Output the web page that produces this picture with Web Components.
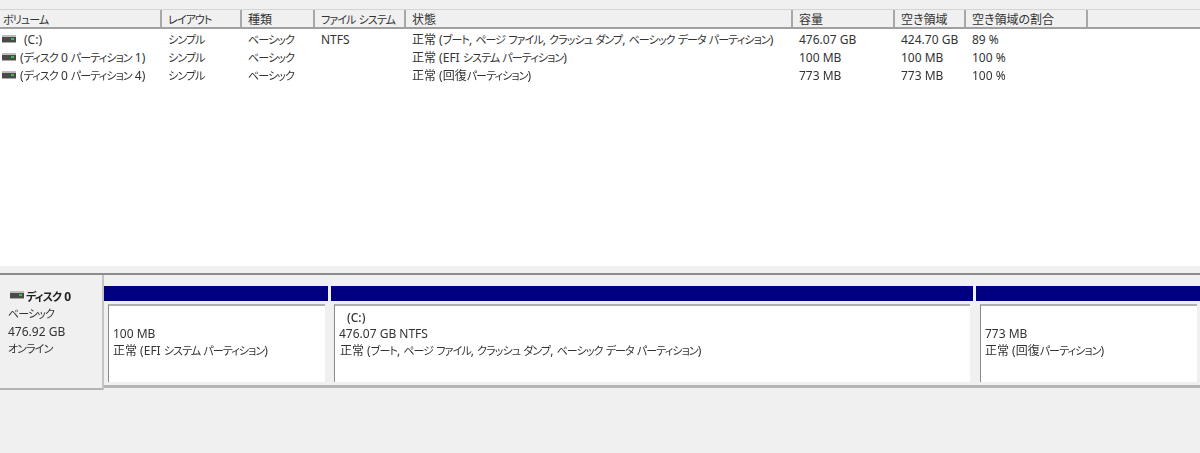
<!DOCTYPE html>
<html lang="ja">
<head>
<meta charset="utf-8">
<title>ディスクの管理</title>
<style>
html, body { margin: 0; height: 100%; overflow: hidden; }
body {
  background: #f0f0f0;
  color: #333;
  font: 12px/18px "Noto Sans", "Noto Sans CJK JP", sans-serif;
  font-feature-settings: "palt";
  --cols: 162px 80px 73px 91px 387px 102px 71px 122px 1fr;
}
</style>
</head>
<body>
<disk-manager>
  <volume-list slot="top">
    <list-head>
      <jp-t>ボリューム</jp-t><jp-t>レイアウト</jp-t><jp-t>種類</jp-t><jp-t>ファイル システム</jp-t><jp-t>状態</jp-t><jp-t>容量</jp-t><jp-t>空き領域</jp-t><jp-t>空き領域の割合</jp-t><span></span>
    </list-head>
    <list-row name="(C:)" gap="8">
      <jp-t>シンプル</jp-t><jp-t>ベーシック</jp-t><jp-t>NTFS</jp-t><jp-t>正常 (ブート, ページ ファイル, クラッシュ ダンプ, ベーシック データ パーティション)</jp-t><jp-t>476.07 GB</jp-t><jp-t>424.70 GB</jp-t><jp-t>89 %</jp-t>
    </list-row>
    <list-row name="(ディスク 0 パーティション 1)" gap="4">
      <jp-t>シンプル</jp-t><jp-t>ベーシック</jp-t><span></span><jp-t>正常 (EFI システム パーティション)</jp-t><jp-t>100 MB</jp-t><jp-t>100 MB</jp-t><jp-t>100 %</jp-t>
    </list-row>
    <list-row name="(ディスク 0 パーティション 4)" gap="4">
      <jp-t>シンプル</jp-t><jp-t>ベーシック</jp-t><span></span><jp-t>正常 (回復パーティション)</jp-t><jp-t>773 MB</jp-t><jp-t>773 MB</jp-t><jp-t>100 %</jp-t>
    </list-row>
  </volume-list>
  <disk-row slot="bottom">
    <disk-label slot="label" name="ディスク 0">
      <div><jp-t>ベーシック</jp-t></div><div>476.92 GB</div><div><jp-t>オンライン</jp-t></div>
    </disk-label>
    <disk-part style="width:224px" inset="4">
      <div style="height:16px"></div><div>100 MB</div><div><jp-t>正常 (EFI システム パーティション)</jp-t></div>
    </disk-part>
    <disk-part style="width:642px" inset="3">
      <div style="height:16px;padding-left:8px;font-weight:500">(C:)</div><div>476.07 GB NTFS</div><div style="padding-left:1px"><jp-t>正常 (ブート, ページ ファイル, クラッシュ ダンプ, ベーシック データ パーティション)</jp-t></div>
    </disk-part>
    <disk-part style="flex:1" inset="4">
      <div style="height:16px"></div><div>773 MB</div><div><jp-t>正常 (回復パーティション)</jp-t></div>
    </disk-part>
  </disk-row>
</disk-manager>

<script>
var driveSvg = `<svg width="14" height="8" viewBox="0 0 14 8" style="display:block;flex:none">
<rect x="0" y="0" width="14" height="2" fill="#bdbdbd"/>
<rect x="0" y="2" width="14" height="5" fill="#4a4a4a"/>
<rect x="9" y="3" width="3" height="2" fill="#35c03a"/>
<rect x="0" y="7" width="14" height="1" fill="#a8a8a8"/>
</svg>`

// moves the children of a row into named slots, one per grid cell
function slotCells(el) {
  var cells = ''
  for(var i = 0; i < el.children.length; i++) {
    el.children[i].slot = 'c' + i
    cells += `<div class="cell"><slot name="c${i}"></slot></div>`
  }
  return cells
}

// katakana in the reference font is narrow, so those runs get squeezed
class JpText extends HTMLElement {
  connectedCallback() {
    var shadow = this.attachShadow({mode: 'open'})
    var html = this.textContent.replace(/[\u30A0-\u30FF]+/g, function(run) {
      return `<span class="k">${run}</span>`
    })
    shadow.innerHTML = `<style>
:host { display: inline; }
.k { font-size: 11px; letter-spacing: -0.9px; }
</style>${html}`
  }
}
customElements.define('jp-t', JpText)

class DiskManager extends HTMLElement {
  connectedCallback() {
    var shadow = this.attachShadow({mode: 'open'})
    shadow.innerHTML = `<style>
:host { display: flex; flex-direction: column; height: 453px; filter: blur(0.3px); }
#top { flex: none; height: 266px; padding-top: 9px; box-sizing: border-box; }
#split { flex: none; height: 9px; border-bottom: 2px solid #8c8c8c; box-sizing: border-box; }
#bottom { flex: 1; }
</style>
<div id="top"><slot name="top"></slot></div>
<div id="split"></div>
<div id="bottom"><slot name="bottom"></slot></div>`
  }
}
customElements.define('disk-manager', DiskManager)

class VolumeList extends HTMLElement {
  connectedCallback() {
    var shadow = this.attachShadow({mode: 'open'})
    shadow.innerHTML = `<style>
:host { display: block; height: 257px; background: #fff; }
</style><slot></slot>`
  }
}
customElements.define('volume-list', VolumeList)

class ListHead extends HTMLElement {
  connectedCallback() {
    var shadow = this.attachShadow({mode: 'open'})
    var cells = slotCells(this)
    shadow.innerHTML = `<style>
:host { display: grid; grid-template-columns: var(--cols); height: 20px; background: #f0f0f0; box-sizing: border-box; border-top: 1px solid #d4d4d4; border-bottom: 2px solid #a0a0a0; }
.cell { padding-left: 6px; border-right: 2px solid #a8a8a8; box-sizing: border-box; line-height: 19px; white-space: nowrap; overflow: hidden; }
.cell:first-of-type { padding-left: 3px; }
.cell:last-of-type { border-right: 0; }
</style>${cells}`
  }
}
customElements.define('list-head', ListHead)

class ListRow extends HTMLElement {
  connectedCallback() {
    var shadow = this.attachShadow({mode: 'open'})
    var cells = slotCells(this)
    shadow.innerHTML = `<style>
:host { display: grid; grid-template-columns: var(--cols); height: 18px; }
.cell { padding: 1px 0 0 6px; white-space: nowrap; line-height: 20px; }
#first { display: flex; align-items: center; padding: 1px 0 0 2px; line-height: 20px; white-space: nowrap; gap: ${this.getAttribute('gap')}px; }
#first svg { margin-top: -2px; }
</style>
<div id="first">${driveSvg}<jp-t>${this.getAttribute('name')}</jp-t></div>${cells}`
  }
}
customElements.define('list-row', ListRow)

class DiskRow extends HTMLElement {
  connectedCallback() {
    var shadow = this.attachShadow({mode: 'open'})
    shadow.innerHTML = `<style>
:host { display: flex; align-items: flex-start; }
#parts { flex: 1; min-width: 0; display: flex; gap: 3px; padding: 11px 0 0 0; height: 99px; border-bottom: 3px solid #b4b4b4; }
</style>
<slot name="label"></slot>
<div id="parts"><slot></slot></div>`
  }
}
customElements.define('disk-row', DiskRow)

class DiskLabel extends HTMLElement {
  connectedCallback() {
    var shadow = this.attachShadow({mode: 'open'})
    shadow.innerHTML = `<style>
:host { display: block; flex: none; width: 104px; height: 115px; box-sizing: border-box; padding: 13px 0 0 8px; border-right: 2px solid #c4c4c4; border-bottom: 2px solid #b4b4b4; }
#name { display: flex; align-items: center; gap: 2px; font-weight: 700; height: 17px; margin-left: 2px; color: #222; }
#name svg { margin-top: -4px; }
::slotted(div) { height: 17.5px; }
</style>
<div id="name">${driveSvg}<jp-t>${this.getAttribute('name')}</jp-t></div>
<slot></slot>`
  }
}
customElements.define('disk-label', DiskLabel)

class DiskPart extends HTMLElement {
  connectedCallback() {
    var shadow = this.attachShadow({mode: 'open'})
    shadow.innerHTML = `<style>
:host { display: flex; flex-direction: column; height: 96px; min-width: 0; }
#bar { flex: none; height: 15px; background: #000080; }
#body { flex: 1; margin: 3px 3px 0 ${this.getAttribute('inset')}px; background: #fff; border-top: 2px solid #b0b0b0; border-left: 1px solid #8a8a8a; padding: 3px 0 0 4px; white-space: nowrap; overflow: hidden; line-height: 17px; }
</style>
<div id="bar"></div>
<div id="body"><slot></slot></div>`
  }
}
customElements.define('disk-part', DiskPart)
</script>
</body>
</html>
